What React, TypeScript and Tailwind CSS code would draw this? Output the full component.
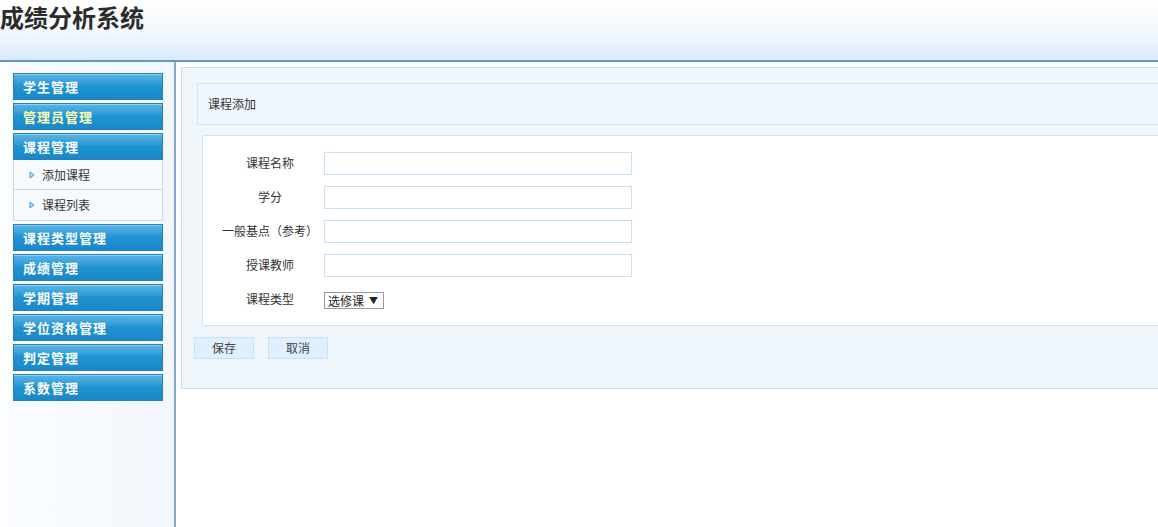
import React from 'react';

const font = { fontFamily: '"Noto Sans CJK SC", "Noto Sans", sans-serif' };

function MenuHead({ label, yellow = false }: { label: string; yellow?: boolean }) {
  return (
    <div className="h-[27px] w-[150px] border border-[#2a7dbb] bg-gradient-to-b from-[#5ab6e6] via-[#1f93d1] to-[#1a88c8] flex items-center pl-[9px] shadow-[inset_0_1px_0_#8fd0f2]">
      <span className={`text-[13px] font-bold tracking-[1px] ${yellow ? 'text-[#ffffb0]' : 'text-white'}`}>{label}</span>
    </div>
  );
}

function SubItem({ label, last = false }: { label: string; last?: boolean }) {
  return (
    <div className={`h-[30px] flex items-center pl-[15px] text-[12px] text-[#333] ${last ? '' : 'border-b border-[#c9dbe7]'}`}>
      <svg width="6" height="8" viewBox="0 0 6 8" className="mr-[7px]">
        <path d="M1 1 L5 4 L1 7 Z" fill="#bfe3f7" stroke="#3b9bd6" strokeWidth="1" />
      </svg>
      {label}
    </div>
  );
}

function FormRow({ label, children }: { label: string; children: React.ReactNode }) {
  return (
    <div className="h-[34px] flex items-center">
      <div className="w-[118px] pl-[16px] text-center text-[12px] text-[#333] whitespace-nowrap">{label}</div>
      <div className="ml-[3px]">{children}</div>
    </div>
  );
}

export default function App() {
  return (
    <div className="w-[1158px] h-[527px] overflow-hidden bg-white" style={font}>
      {/* Header */}
      <div className="h-[62px] bg-gradient-to-b from-white via-[#f3f8fe] to-[#d9eafb] border-b-2 border-[#5e98c9]">
        <h1 className="text-[24px] font-bold text-[#2b2b2b] leading-[34px]">成绩分析系统</h1>
      </div>

      <div className="flex h-[465px]">
        {/* Sidebar */}
        <div className="w-[176px] shrink-0 bg-gradient-to-r from-[#fbfdff] to-[#f1f7fd] border-r-2 border-[#84abcf] pl-[13px] pt-[11px]">
          <div className="flex flex-col gap-[3px]">
            <MenuHead label="学生管理" />
            <MenuHead label="管理员管理" yellow />
            <div>
              <MenuHead label="课程管理" />
              <div className="w-[150px] bg-[#f6fafd] border border-t-0 border-[#c9dbe7]">
                <SubItem label="添加课程" />
                <SubItem label="课程列表" last />
              </div>
            </div>
            <MenuHead label="课程类型管理" />
            <MenuHead label="成绩管理" />
            <MenuHead label="学期管理" />
            <MenuHead label="学位资格管理" />
            <MenuHead label="判定管理" />
            <MenuHead label="系数管理" />
          </div>
        </div>

        {/* Main */}
        <div className="flex-1 pl-[5px] pt-[5px]">
          <div className="h-[322px] bg-[#eff7fc] border border-r-0 border-[#c4e0f6] pl-[15px] pt-[15px]">
            <div className="h-[42px] border border-r-0 border-[#cfe6f8] flex items-center pl-[10px] text-[12px] text-[#333]">
              课程添加
            </div>
            <div className="mt-[10px] ml-[5px] h-[191px] bg-white border border-r-0 border-[#cfe6f8] pt-[10px]">
              <FormRow label="课程名称">
                <input className="block w-[308px] h-[23px] border border-[#c5e0f8] bg-white outline-none" />
              </FormRow>
              <FormRow label="学分">
                <input className="block w-[308px] h-[23px] border border-[#c5e0f8] bg-white outline-none" />
              </FormRow>
              <FormRow label="一般基点（参考）">
                <input className="block w-[308px] h-[23px] border border-[#c5e0f8] bg-white outline-none" />
              </FormRow>
              <FormRow label="授课教师">
                <input className="block w-[308px] h-[23px] border border-[#c5e0f8] bg-white outline-none" />
              </FormRow>
              <FormRow label="课程类型">
                <div className="mt-[3px] h-[17px] w-[60px] border border-[#9a9a9a] bg-white flex items-center pl-[3px] text-[12px] text-[#222] leading-none">
                  选修课
                  <span className="ml-[5px] text-[9px]">▼</span>
                </div>
              </FormRow>
            </div>
            <div className="flex gap-[14px] mt-[11px] -ml-[3px]">
              <button className="w-[60px] h-[22px] bg-[#e0effd] border border-[#c6e0f7] text-[12px] text-[#444]">保存</button>
              <button className="w-[60px] h-[22px] bg-[#e0effd] border border-[#c6e0f7] text-[12px] text-[#444]">取消</button>
            </div>
          </div>
        </div>
      </div>
    </div>
  );
}
